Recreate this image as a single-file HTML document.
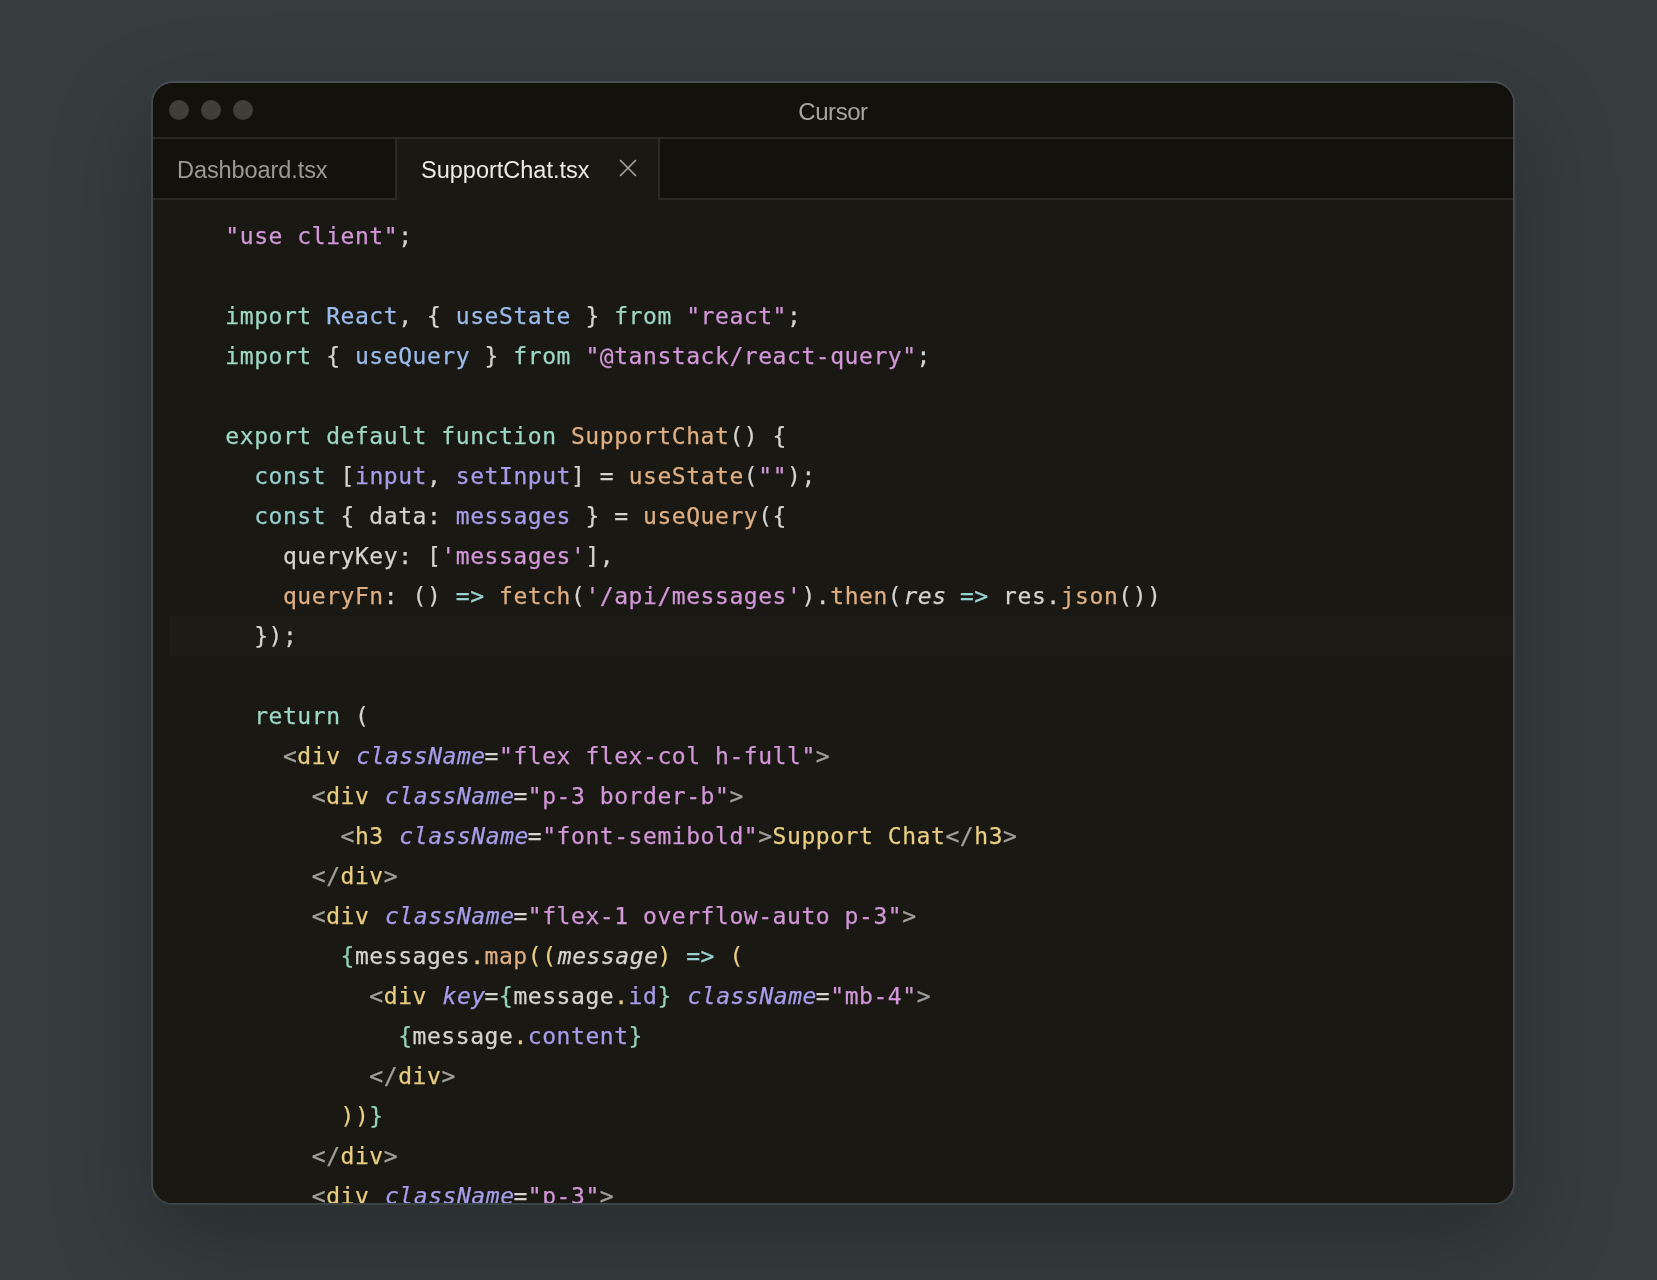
<!DOCTYPE html>
<html lang="en">
<head>
<meta charset="utf-8">
<title>Cursor</title>
<style>
  html, body { margin: 0; padding: 0; }
  body {
    width: 1657px; height: 1280px; overflow: hidden; position: relative;
    background: #363d3f;
    font-family: "Liberation Sans", sans-serif;
  }
  .win {
    position: absolute; left: 151px; top: 81px;
    width: 1360px; height: 1120px;
    border: 2px solid #424a4e; border-top-color: #475054; border-bottom-color: #3d4448;
    border-radius: 22px;
    background: #1a1813;
    overflow: hidden;
    box-shadow: 0 36px 98px rgba(0,0,0,0.27);
    will-change: transform;
  }
  .titlebar {
    position: absolute; left: 0; top: 0; width: 1360px; height: 54px;
    background: #13110c; border-bottom: 2px solid #2b2924;
  }
  .dot { position: absolute; top: 17px; width: 20px; height: 20px; border-radius: 50%; background: #403e39; }
  .title {
    position: absolute; left: 0; width: 1360px; top: 0; height: 54px; line-height: 58px;
    text-align: center; color: #a7a59e; font-size: 24px; letter-spacing: -0.45px;
  }
  .tabs {
    position: absolute; left: 0; top: 56px; width: 1360px; height: 59px;
    background: #13110c; border-bottom: 2px solid #2b2924;
  }
  .tab {
    position: absolute; top: 0; height: 59px; line-height: 62px; font-size: 23.5px; letter-spacing: 0;
    box-sizing: border-box; border-right: 2px solid #2b2924; padding-left: 24px;
    white-space: nowrap;
  }
  .tab1 { left: 0; width: 244px; color: #9b9991; letter-spacing: -0.08px; }
  .tab2 { left: 244px; width: 263px; height: 61px; color: #eceae4; background: #1a1813; }
  .close { position: absolute; left: 222px; top: 20px; width: 18px; height: 18px; }
  .editor {
    position: absolute; left: 0; top: 117px; width: 1360px; height: 1003px; overflow: hidden;
    background: #1a1813;
  }
  pre {
    margin: 0; position: absolute; left: 0; top: 16px; width: 1360px;
    font-family: "DejaVu Sans Mono", "Liberation Mono", monospace;
    font-size: 23px; line-height: 40px; letter-spacing: 0.553px;
    color: #d3d3cf; tab-size: 2; -webkit-text-stroke: 0.25px;
  }
  .ln { display: block; height: 40px; padding-left: 72.35px; white-space: pre; }
  .hl { background: #1d1b16; margin-left: 16px; padding-left: 56.35px; }
  .k { color: #9dd7c6; } /* keyword mint */
  .c { color: #98d1d0; } /* const / arrow cyan */
  .b { color: #9bbbec; } /* blue import ident */
  .s { color: #d297d8; } /* string pink */
  .f { color: #dfaf83; } /* function orange */
  .v { color: #a69deb; } /* purple variable */
  .a { color: #a69deb; font-style: italic; position: relative; left: 1.2px; } /* attr purple italic */
  .t { color: #e9cd80; } /* tag yellow */
  .g { color: #a0a09b; } /* tag bracket grey */
  .j { color: #93cfb8; } /* jsx brace */
  .i { font-style: italic; position: relative; left: 1.2px; }
</style>
</head>
<body>
<div class="win">
  <div class="titlebar">
    <div class="dot" style="left:16px"></div>
    <div class="dot" style="left:48px"></div>
    <div class="dot" style="left:80px"></div>
    <div class="title">Cursor</div>
  </div>
  <div class="tabs">
    <div class="tab tab1">Dashboard.tsx</div>
    <div class="tab tab2">SupportChat.tsx<svg class="close" viewBox="0 0 18 18"><path d="M1 1 L17 17 M17 1 L1 17" stroke="#a8a69e" stroke-width="1.6" fill="none"/></svg></div>
  </div>
  <div class="editor">
<pre><span class="ln"><span class="s">"use client"</span>;</span
><span class="ln"> </span
><span class="ln"><span class="k">import</span> <span class="b">React</span>, { <span class="b">useState</span> } <span class="k">from</span> <span class="s">"react"</span>;</span
><span class="ln"><span class="k">import</span> { <span class="b">useQuery</span> } <span class="k">from</span> <span class="s">"@tanstack/react-query"</span>;</span
><span class="ln"> </span
><span class="ln"><span class="k">export default function</span> <span class="f">SupportChat</span>() {</span
><span class="ln">  <span class="c">const</span> [<span class="v">input</span>, <span class="v">setInput</span>] = <span class="f">useState</span>(<span class="s">""</span>);</span
><span class="ln">  <span class="c">const</span> { data: <span class="v">messages</span> } = <span class="f">useQuery</span>({</span
><span class="ln">    queryKey: [<span class="s">'messages'</span>],</span
><span class="ln">    <span class="f">queryFn</span>: () <span class="c">=&gt;</span> <span class="f">fetch</span>(<span class="s">'/api/messages'</span>).<span class="f">then</span>(<span class="i">res</span> <span class="c">=&gt;</span> res.<span class="f">json</span>())</span
><span class="ln hl">  });</span
><span class="ln"> </span
><span class="ln">  <span class="k">return</span> (</span
><span class="ln">    <span class="g">&lt;</span><span class="t">div</span> <span class="a">className</span>=<span class="s">"flex flex-col h-full"</span><span class="g">&gt;</span></span
><span class="ln">      <span class="g">&lt;</span><span class="t">div</span> <span class="a">className</span>=<span class="s">"p-3 border-b"</span><span class="g">&gt;</span></span
><span class="ln">        <span class="g">&lt;</span><span class="t">h3</span> <span class="a">className</span>=<span class="s">"font-semibold"</span><span class="g">&gt;</span><span class="t">Support Chat</span><span class="g">&lt;/</span><span class="t">h3</span><span class="g">&gt;</span></span
><span class="ln">      <span class="g">&lt;/</span><span class="t">div</span><span class="g">&gt;</span></span
><span class="ln">      <span class="g">&lt;</span><span class="t">div</span> <span class="a">className</span>=<span class="s">"flex-1 overflow-auto p-3"</span><span class="g">&gt;</span></span
><span class="ln">        <span class="j">{</span>messages<span class="t">.</span><span class="f">map</span><span class="t">((</span><span class="i">message</span><span class="t">)</span> <span class="c">=&gt;</span> <span class="t">(</span></span
><span class="ln">          <span class="g">&lt;</span><span class="t">div</span> <span class="a">key</span>=<span class="j">{</span>message<span class="t">.</span><span class="v">id</span><span class="j">}</span> <span class="a">className</span>=<span class="s">"mb-4"</span><span class="g">&gt;</span></span
><span class="ln">            <span class="j">{</span>message<span class="t">.</span><span class="v">content</span><span class="j">}</span></span
><span class="ln">          <span class="g">&lt;/</span><span class="t">div</span><span class="g">&gt;</span></span
><span class="ln">        <span class="t">))</span><span class="j">}</span></span
><span class="ln">      <span class="g">&lt;/</span><span class="t">div</span><span class="g">&gt;</span></span
><span class="ln">      <span class="g">&lt;</span><span class="t">div</span> <span class="a">className</span>=<span class="s">"p-3"</span><span class="g">&gt;</span></span
></pre>
  </div>
</div>
</body>
</html>
